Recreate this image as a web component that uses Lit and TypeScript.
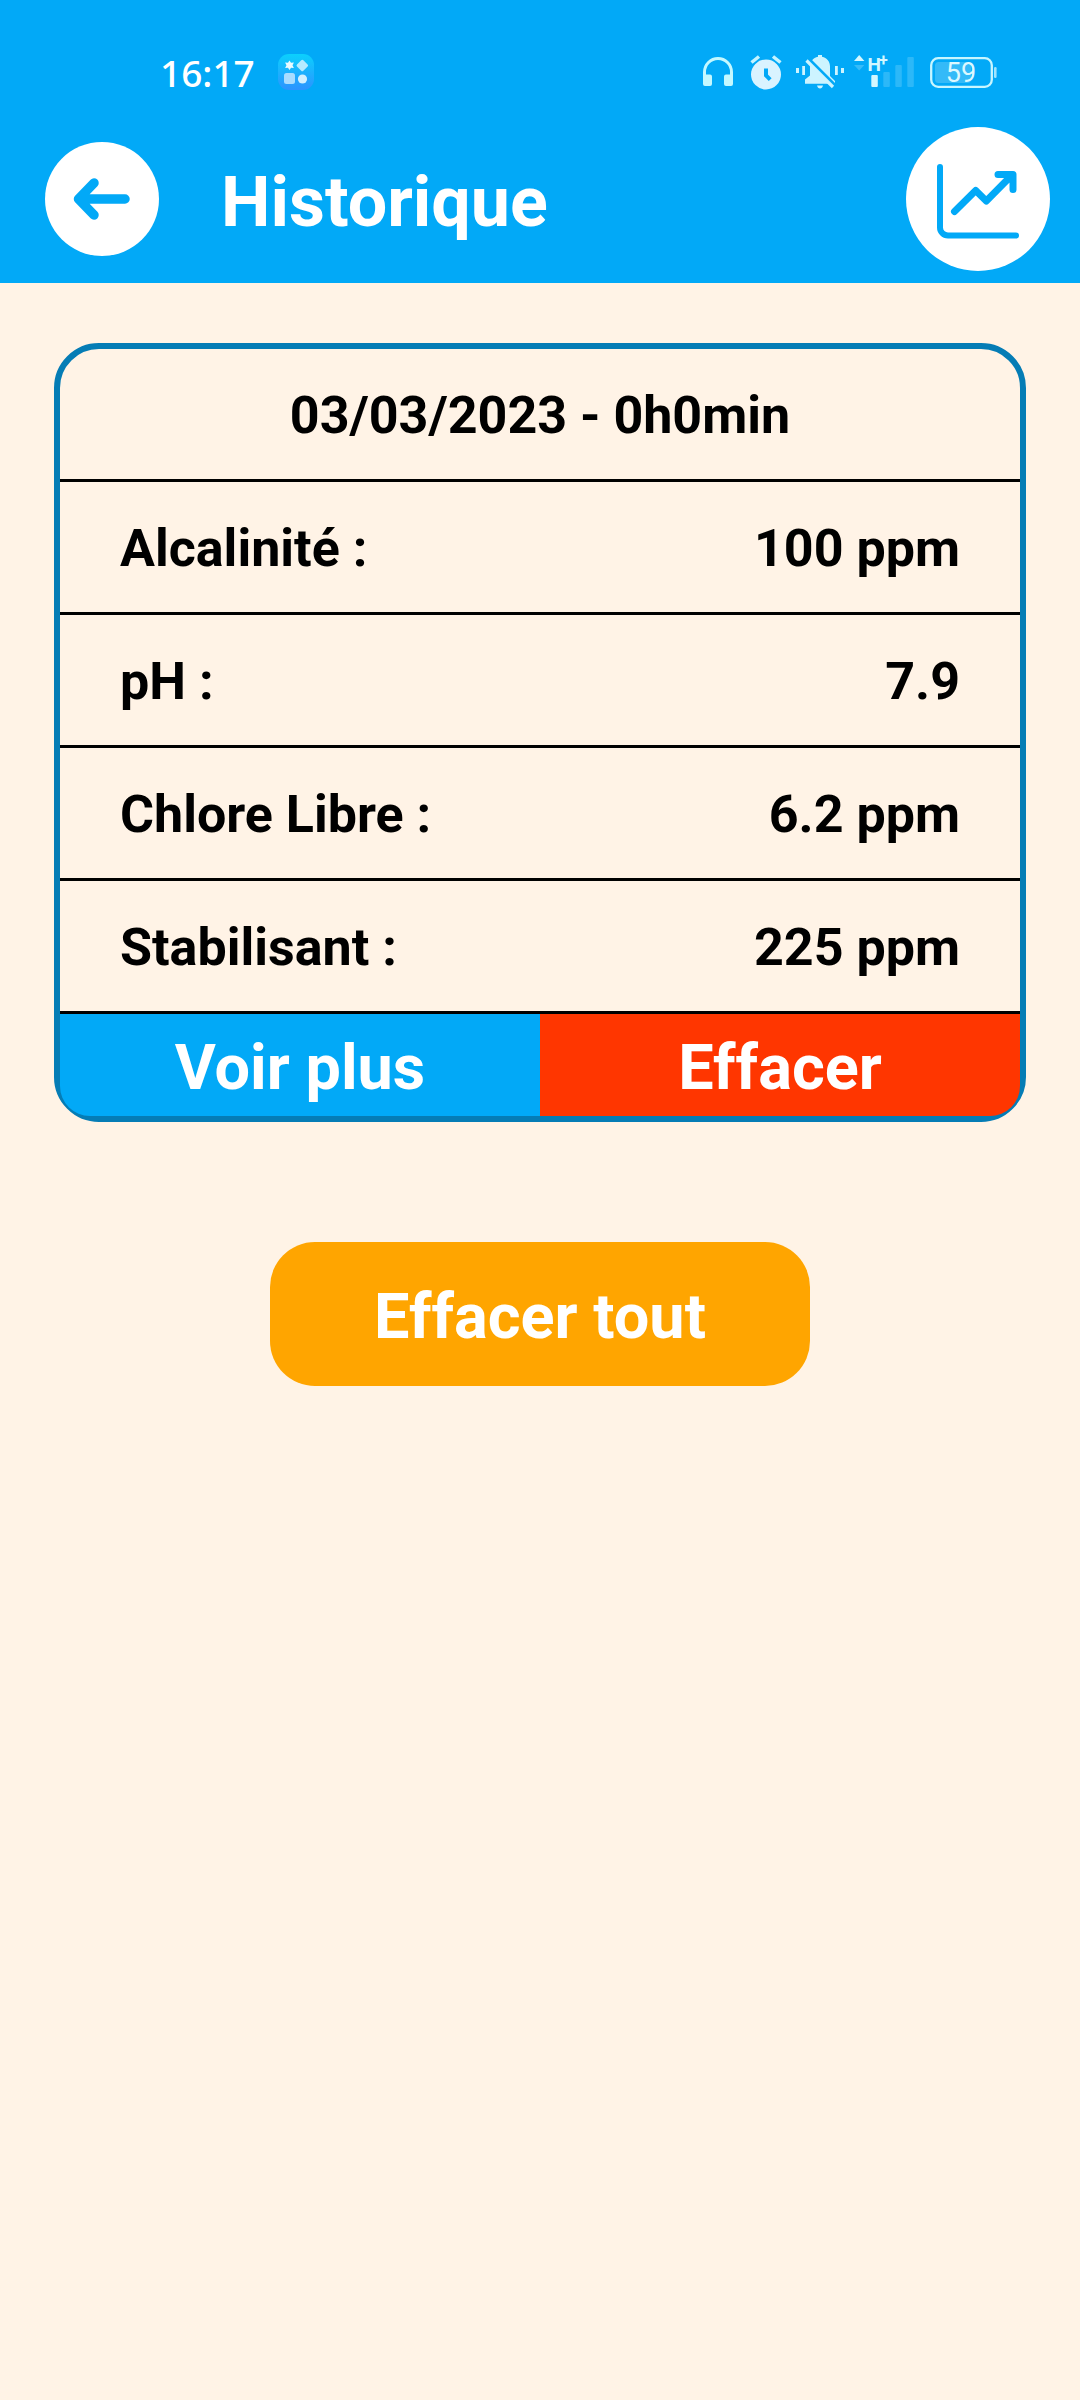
import { LitElement, html, css, svg } from "lit";
import { customElement, property, state } from "lit/decorators.js";

interface Measure {
  label: string;
  value: string;
}

interface HistoryEntry {
  date: string;
  measures: Measure[];
}

const BLUE = "#02a9f7";

@customElement("status-bar")
export class StatusBar extends LitElement {
  static styles = css`
    :host {
      display: block;
      color: #fff;
    }
    .bar {
      display: flex;
      align-items: center;
      justify-content: space-between;
      height: 36px;
      padding: 54px 82px 25px 160px;
    }
    .side {
      display: flex;
      align-items: center;
      gap: 10px;
    }
    .start {
      gap: 23px;
    }
    .time {
      padding-top: 2px;
      font: 500 37px/36px "Noto Sans", sans-serif;
    }
    .icon {
      display: block;
      flex: none;
    }
    .level {
      font: 400 27px "Roboto", sans-serif;
    }
    .network {
      font: 700 19px "Roboto", sans-serif;
    }
    .plus {
      font: 700 16px "Roboto", sans-serif;
    }
  `;

  render() {
    return html`
      <div class="bar">
        <div class="side start">
          <span class="time">16:17</span>
          <svg class="icon" width="36" height="36" viewBox="0 0 36 36" aria-hidden="true">
            <defs>
              <linearGradient id="tile" x1="0" y1="0" x2="0" y2="1">
                <stop offset="0" stop-color="#0bd0fd" />
                <stop offset="1" stop-color="#2c93ff" />
              </linearGradient>
            </defs>
            <rect width="36" height="36" rx="11" fill="url(#tile)" />
            <path d="M11.500 6.500l1.500 2.300 2.900-.2-1.400 2.700 1.400 2.700-2.900-.2-1.500 2.300-1.500-2.300-2.900.2 1.400-2.700-1.400-2.700 2.900.2z" fill="#e9fbff" />
            <rect x="19.800" y="7" width="9" height="9" rx="1.500" transform="rotate(45 24.300 11.500)" fill="#b5ebff" />
            <rect x="6" y="19" width="11" height="11" rx="2.500" fill="#a9dcff" />
            <circle cx="24.500" cy="25" r="4.600" fill="#d3f0ff" />
          </svg>
        </div>
        <div class="side">
          <svg class="icon" width="34" height="36" viewBox="-1 -3 34 36" fill="#c4f8ff" aria-hidden="true">
            <path d="M1.500 19v-4a13.500 13.500 0 0 1 27 0v4" fill="none" stroke="#c4f8ff" stroke-width="3" />
            <path d="M0 17.500h7a2 2 0 0 1 2 2V27a2 2 0 0 1-2 2H2a2 2 0 0 1-2-2zM30 17.500h-7a2 2 0 0 0-2 2V27a2 2 0 0 0 2 2h5a2 2 0 0 0 2-2z" />
          </svg>
          <svg class="icon" width="40" height="36" viewBox="-4 -1 40 36" fill="none" aria-hidden="true">
            <circle cx="16" cy="19.500" r="15" fill="#d9f3ff" />
            <path d="M1.500 7.500l7.500-6M30.500 7.500L23 1.500" stroke="#c4f3ff" stroke-width="3.500" />
            <path d="M16 13.500v7l4.200 4.200" stroke="${BLUE}" stroke-width="4" />
          </svg>
          <svg class="icon" width="48" height="36" viewBox="0 -1 48 36" fill="#cdf4ff" aria-hidden="true">
            <path d="M0 13h3v5H0zM6.200 11H9v9H6.200zM39 11h2.800v9H39zM45 13h3v5h-3z" />
            <path d="M22 1.700V0h4v1.700c5 1 8 4.800 8 9.800v9.500l5 5v2.700H9V24.500l5-4v-9c0-5 3-8.800 8-9.800z" />
            <path d="M21 30.500h6c-.5 2-1.500 3-3 3s-2.500-1-3-3z" />
            <path d="M13 4.500l26 26" stroke="${BLUE}" stroke-width="3.500" />
            <path d="M10.500 5.500l26.500 26.500" stroke="#cdf4ff" stroke-width="3.200" />
          </svg>
          <svg class="icon" width="64" height="46" viewBox="0 -6 64 46" fill="#d3f7ff" aria-hidden="true">
            <path d="M0 6l5.200-6 5.200 6z" />
            <path d="M0 10h10.400l-5.200 5.500z" opacity=".25" />
            <text class="network" x="13.500" y="16">H</text>
            <text class="plus" x="25" y="11">+</text>
            <rect x="17.300" y="20" width="6.500" height="12" rx="1" />
            <g opacity=".2">
              <rect x="29.300" y="17" width="6.500" height="15" rx="1" />
              <rect x="41.300" y="10" width="6.500" height="22" rx="1" />
              <rect x="53.300" y="2" width="6.500" height="30" rx="1" />
            </g>
          </svg>
          <svg class="icon" width="70" height="36" viewBox="-2 -3 70 36" aria-hidden="true">
            <rect x="1.200" y="1.200" width="60.600" height="28.600" rx="7" fill="none" stroke="#c8f6ff" stroke-width="2.300" />
            <rect x="5" y="5" width="36" height="21" rx="3.500" fill="#fff" opacity=".2" />
            <rect x="64" y="10" width="2.600" height="11" rx="1.200" fill="#9fe5ff" />
            <text class="level" x="31" y="25" text-anchor="middle" fill="#dcf8ff">59</text>
          </svg>
        </div>
      </div>
    `;
  }
}

@customElement("history-card")
export class HistoryCard extends LitElement {
  @property({ attribute: false }) entry!: HistoryEntry;

  static styles = css`
    :host {
      display: block;
      border: 6px solid #057cb5;
      border-radius: 45px;
    }
    .measures {
      width: 100%;
      border-collapse: separate;
      border-spacing: 0;
      font-size: 52px;
      line-height: 62px;
    }
    .cell {
      padding: 36px 60px 32px;
      border-bottom: 3px solid #000;
      font-weight: 700;
      text-align: left;
    }
    .date {
      text-align: center;
    }
    .value {
      text-align: right;
    }
    .actions {
      display: grid;
      grid-template-columns: 1fr 1fr;
    }
    .action {
      margin: 0;
      border: 0;
      padding: 17px 0 11px;
      color: #fff;
      font: 700 63px/74px "Roboto", sans-serif;
      cursor: pointer;
    }
    .more {
      background: #02a9f7;
      border-bottom-left-radius: 30px;
    }
    .delete {
      background: #ff3600;
      border-bottom-right-radius: 30px;
    }
  `;

  private remove() {
    this.dispatchEvent(new CustomEvent("entry-delete", { detail: this.entry }));
  }

  render() {
    return html`
      <table class="measures">
        <thead>
          <tr>
            <th class="cell date" colspan="2" scope="colgroup">${this.entry.date}</th>
          </tr>
        </thead>
        <tbody>
          ${this.entry.measures.map(
            (m) => html`
              <tr>
                <th class="cell" scope="row">${m.label}</th>
                <td class="cell value">${m.value}</td>
              </tr>
            `
          )}
        </tbody>
      </table>
      <div class="actions">
        <button class="action more" type="button">Voir plus</button>
        <button class="action delete" type="button" @click=${this.remove}>Effacer</button>
      </div>
    `;
  }
}

const arrowIcon = svg`<path d="M80 57H34M49 41L33.500 57L49 73" />`;
const chartIcon = svg`
  <path d="M34 40v60.500a8 8 0 0 0 8 8H110" />
  <path d="M48.500 84.500L69.700 63.500L80.300 74L106 48M92 47.500h15V62.500" stroke-width="7" />
`;

@customElement("app-root")
export class AppRoot extends LitElement {
  @state() private entries: HistoryEntry[] = [
    {
      date: "03/03/2023 - 0h0min",
      measures: [
        { label: "Alcalinité :", value: "100 ppm" },
        { label: "pH :", value: "7.9" },
        { label: "Chlore Libre :", value: "6.2 ppm" },
        { label: "Stabilisant :", value: "225 ppm" },
      ],
    },
  ];

  static styles = css`
    :host {
      display: block;
      min-height: 100vh;
      background: #fff3e6;
      color: #000;
      font-family: "Roboto", sans-serif;
    }
    .top {
      background: #02a9f7;
    }
    .header {
      display: flex;
      align-items: center;
      padding: 12px 30px 12px 45px;
    }
    .title {
      flex: 1;
      margin: 0 0 0 62px;
      padding-top: 6px;
      color: #fff;
      font-size: 70px;
      line-height: 80px;
      font-weight: 700;
    }
    .round {
      flex: none;
      margin: 0;
      border: 0;
      padding: 0;
      border-radius: 50%;
      background: #fff;
      cursor: pointer;
    }
    .glyph {
      display: block;
      fill: none;
      stroke: #02a9f7;
      stroke-linecap: round;
      stroke-linejoin: round;
    }
    .content {
      display: flex;
      flex-direction: column;
      align-items: center;
      gap: 120px;
      padding: 60px 5%;
    }
    .card {
      align-self: stretch;
    }
    .clear {
      width: 540px;
      max-width: 100%;
      margin: 0;
      border: 0;
      border-radius: 45px;
      padding: 38px 0 32px;
      background: #ffa500;
      color: #fff;
      font: 700 63px/74px "Roboto", sans-serif;
      cursor: pointer;
    }
  `;

  private clearAll() {
    this.entries = [];
  }

  private removeEntry(e: CustomEvent<HistoryEntry>) {
    this.entries = this.entries.filter((entry) => entry !== e.detail);
  }

  render() {
    return html`
      <div class="top">
        <status-bar></status-bar>
        <header class="header">
          <button class="round" type="button" aria-label="Retour">
            <svg class="glyph" width="114" height="114" viewBox="0 0 114 114" stroke-width="9.500">${arrowIcon}</svg>
          </button>
          <h1 class="title">Historique</h1>
          <button class="round" type="button" aria-label="Graphique">
            <svg class="glyph" width="144" height="144" viewBox="0 0 144 144" stroke-width="6">${chartIcon}</svg>
          </button>
        </header>
      </div>
      <main class="content">
        ${this.entries.map(
          (entry) => html`<history-card class="card" .entry=${entry} @entry-delete=${this.removeEntry}></history-card>`
        )}
        <button class="clear" type="button" @click=${this.clearAll}>Effacer tout</button>
      </main>
    `;
  }
}
